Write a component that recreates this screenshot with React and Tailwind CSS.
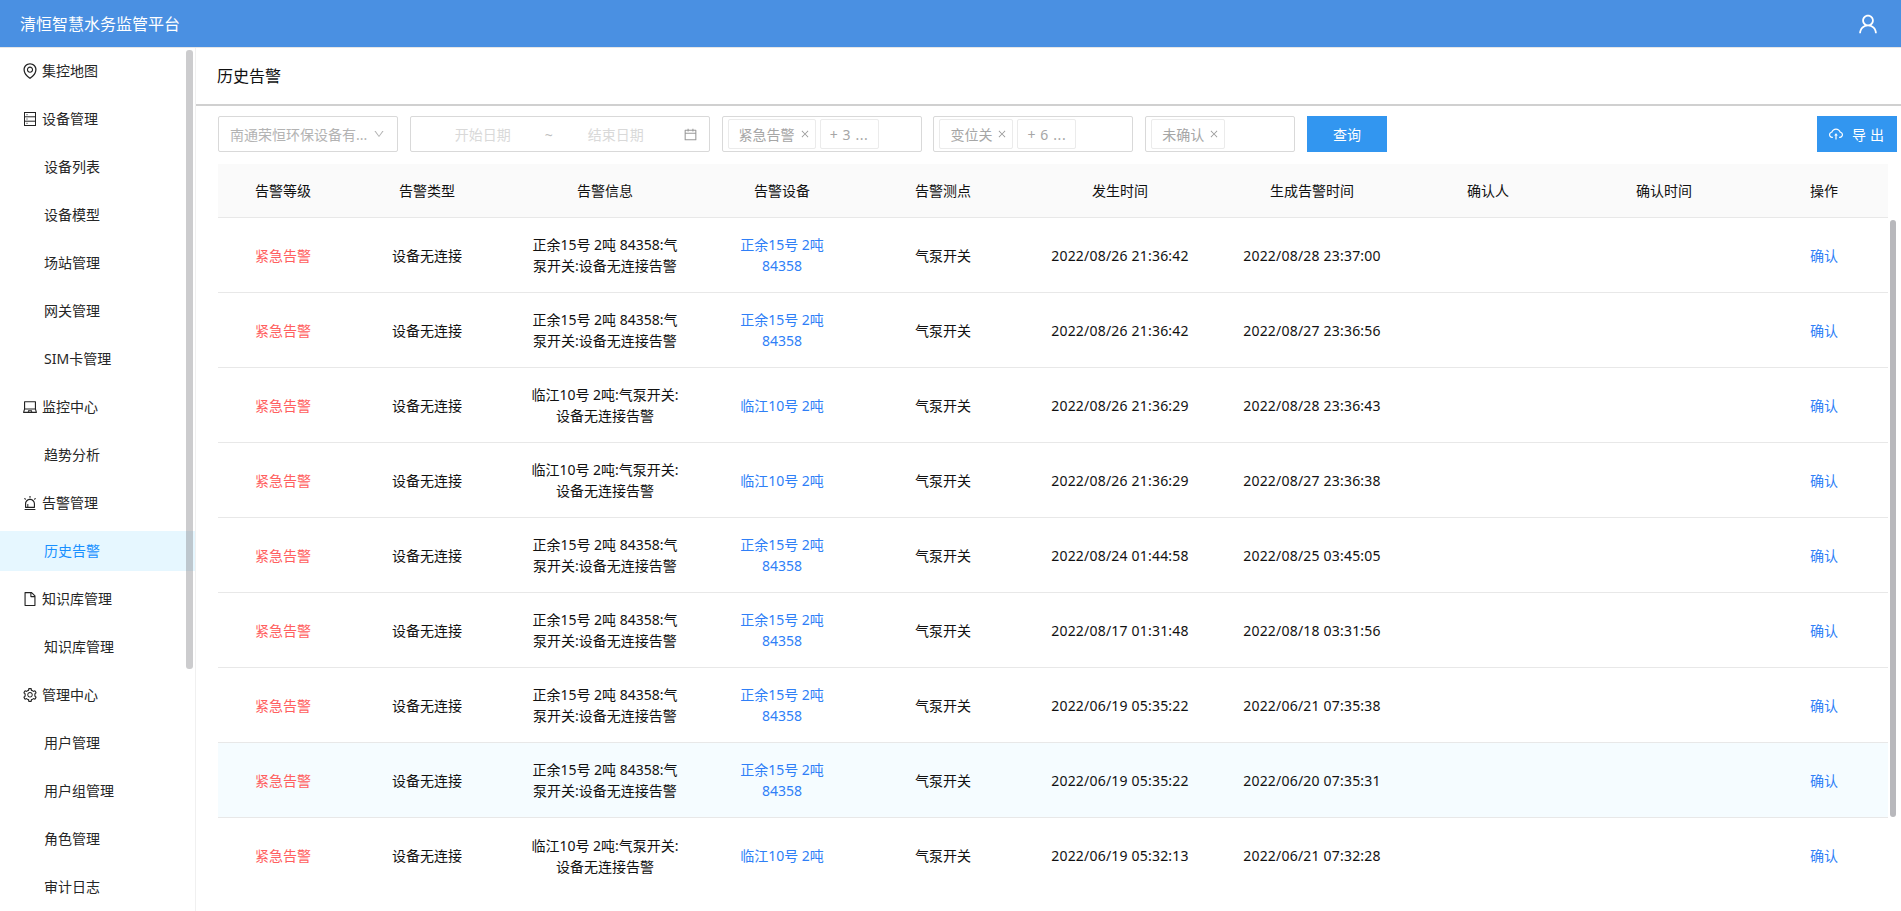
import React from 'react';
import {
  AiOutlineEnvironment,
  AiOutlineLaptop,
  AiOutlineAlert,
  AiOutlineFile,
  AiOutlineSetting,
  AiOutlineUser,
  AiOutlineCloudUpload,
  AiOutlineCalendar,
  AiOutlineDown,
  AiOutlineClose,
} from 'react-icons/ai';

function DeviceIcon({ className }) {
  return (
    <svg className={className} width="14" height="16" viewBox="0 0 14 16" fill="none" stroke="currentColor">
      <rect x="1.5" y="1.5" width="11" height="13" />
      <path d="M1.5 5.8h11M1.5 10.2h11" />
      <path d="M3.5 3.7h1M3.5 8h1M3.5 12.3h1" />
    </svg>
  );
}

const menu = [
  { label: '集控地图', icon: <AiOutlineEnvironment className="text-[18px]" /> },
  { label: '设备管理', icon: <DeviceIcon /> },
  { label: '设备列表' },
  { label: '设备模型' },
  { label: '场站管理' },
  { label: '网关管理' },
  { label: 'SIM卡管理' },
  { label: '监控中心', icon: <AiOutlineLaptop className="text-[16px]" /> },
  { label: '趋势分析' },
  { label: '告警管理', icon: <AiOutlineAlert className="text-[16px]" /> },
  { label: '历史告警', active: true },
  { label: '知识库管理', icon: <AiOutlineFile className="text-[16px]" /> },
  { label: '知识库管理' },
  { label: '管理中心', icon: <AiOutlineSetting className="text-[16px]" /> },
  { label: '用户管理' },
  { label: '用户组管理' },
  { label: '角色管理' },
  { label: '审计日志' },
];

const columns = [
  { title: '告警等级', w: 'w-[130px]' },
  { title: '告警类型', w: 'w-[158px]' },
  { title: '告警信息', w: 'w-[198px]' },
  { title: '告警设备', w: 'w-[156px]' },
  { title: '告警测点', w: 'w-[166px]' },
  { title: '发生时间', w: 'w-[188px]' },
  { title: '生成告警时间', w: 'w-[196px]' },
  { title: '确认人', w: 'w-[156px]' },
  { title: '确认时间', w: 'w-[196px]' },
  { title: '操作', w: 'w-[124px]' },
];

const zy = {
  info: ['正余15号 2吨 84358:气', '泵开关:设备无连接告警'],
  device: ['正余15号 2吨', '84358'],
};
const lj = {
  info: ['临江10号 2吨:气泵开关:', '设备无连接告警'],
  device: ['临江10号 2吨'],
};

const rows = [
  { ...zy, start: '2022/08/26 21:36:42', created: '2022/08/28 23:37:00' },
  { ...zy, start: '2022/08/26 21:36:42', created: '2022/08/27 23:36:56' },
  { ...lj, start: '2022/08/26 21:36:29', created: '2022/08/28 23:36:43' },
  { ...lj, start: '2022/08/26 21:36:29', created: '2022/08/27 23:36:38' },
  { ...zy, start: '2022/08/24 01:44:58', created: '2022/08/25 03:45:05' },
  { ...zy, start: '2022/08/17 01:31:48', created: '2022/08/18 03:31:56' },
  { ...zy, start: '2022/06/19 05:35:22', created: '2022/06/21 07:35:38' },
  { ...zy, start: '2022/06/19 05:35:22', created: '2022/06/20 07:35:31', hover: true },
  { ...lj, start: '2022/06/19 05:32:13', created: '2022/06/21 07:32:28' },
];

function TagSelect({ width, tag, more }) {
  return (
    <div className={`${width} h-[36px] flex items-center gap-[4px] pl-[5px] border border-[#d9d9d9] rounded-[2px]`}>
      <span className="h-[30px] pl-[10px] pr-[5px] flex items-center gap-[5px] border border-[#ebebeb] rounded-[2px] text-[14px] text-[#a6a6a6] whitespace-nowrap">
        {tag}
        <AiOutlineClose className="text-[10px] text-[#999]" />
      </span>
      {more && (
        <span className="w-[59px] h-[30px] flex items-center justify-center border border-[#ebebeb] rounded-[2px] text-[14px] tracking-[0.6px] text-[#a6a6a6] whitespace-nowrap">
          {more}
        </span>
      )}
    </div>
  );
}

function Sidebar() {
  return (
    <aside className="w-[196px] shrink-0 border-r border-[#f0f0f0] relative overflow-hidden pt-[3px]">
      {menu.map((item, i) => (
        <div
          key={i}
          className={`h-[40px] mb-[8px] flex items-center text-[14px] ${
            item.active ? 'bg-[#e6f7ff] text-[#1890ff]' : 'text-[#262626]'
          } ${item.icon ? 'pl-[21px]' : 'pl-[44px]'}`}
        >
          {item.icon && (
            <span className="w-[18px] h-[18px] mr-[3px] flex items-center justify-center text-[#222] shrink-0">
              {item.icon}
            </span>
          )}
          <span className="pb-[2px]">{item.label}</span>
        </div>
      ))}
      <div className="absolute left-[186px] top-[2px] w-[7px] h-[619px] rounded-[3px] bg-[#7f7f85]/40" />
    </aside>
  );
}

function Table() {
  return (
    <div className="relative mt-[12px] ml-[22px] text-[14px] leading-[21px] text-[#111]">
      <div className="flex w-[1670px] h-[54px] items-center bg-[#fafafa] border-b border-[#e8e8e8]">
        {columns.map((c) => (
          <div key={c.title} className={`${c.w} text-center`}>{c.title}</div>
        ))}
      </div>
      {rows.map((r, i) => (
        <div
          key={i}
          className={`flex w-[1670px] h-[75px] items-center ${r.hover ? 'bg-[#f5fcff]' : ''} ${
            i < rows.length - 1 ? 'border-b border-[#e8e8e8]' : ''
          }`}
        >
          <div className={`${columns[0].w} text-center text-[#ff5f5f]`}>紧急告警</div>
          <div className={`${columns[1].w} text-center`}>设备无连接</div>
          <div className={`${columns[2].w} text-center`}>
            {r.info.map((l) => <div key={l}>{l}</div>)}
          </div>
          <div className={`${columns[3].w} text-center text-[#2f7ff7]`}>
            {r.device.map((l) => <div key={l}>{l}</div>)}
          </div>
          <div className={`${columns[4].w} text-center`}>气泵开关</div>
          <div className={`${columns[5].w} text-center tracking-[0.2px]`}>{r.start}</div>
          <div className={`${columns[6].w} text-center tracking-[0.2px]`}>{r.created}</div>
          <div className={columns[7].w} />
          <div className={columns[8].w} />
          <div className={`${columns[9].w} text-center text-[#2f7ff7]`}>确认</div>
        </div>
      ))}
      {/* table scrollbar */}
      <div className="absolute left-[1672px] top-[56px] w-[6px] h-[597px] rounded-[3px] bg-[#b8b8bc]" />
    </div>
  );
}

export default function App() {
  return (
    <div className="h-[911px] w-[1901px] flex flex-col overflow-hidden bg-white font-['Noto_Sans','Noto_Sans_CJK_SC',sans-serif]">
      <header className="h-[48px] shrink-0 bg-[#4a90e2] border-b border-[#e6e6e6] flex items-center justify-between pl-[20px] pr-[21px] text-white">
        <span className="text-[16px]">清恒智慧水务监管平台</span>
        <AiOutlineUser className="text-[24px]" />
      </header>
      <div className="flex flex-1 min-h-0">
        <Sidebar />
        <main className="flex-1 min-w-0">
          <div className="h-[58px] flex items-center pl-[21px] text-[16px] text-[#111] border-b-2 border-[#d0d0d0]">
            历史告警
          </div>
          <div className="mt-[10px] ml-[22px] mr-[4px] flex items-center gap-[11.8px]">
            <div className="w-[180px] h-[36px] flex items-center justify-between pl-[11px] pr-[12px] border border-[#d9d9d9] rounded-[2px] text-[14px] text-[#b3b3b3]">
              <span className="whitespace-nowrap">南通荣恒环保设备有...</span>
              <AiOutlineDown className="text-[12px] shrink-0" />
            </div>
            <div className="w-[300px] h-[36px] flex items-center border border-[#d9d9d9] rounded-[2px] pr-[11px] text-[14px] text-[#d9d9d9] whitespace-nowrap">
              <span className="w-[100px] shrink-0 text-right">开始日期</span>
              <span className="w-[76px] shrink-0 text-center text-[#bfbfbf]">~</span>
              <span className="w-[57px] shrink-0 text-right">结束日期</span>
              <AiOutlineCalendar className="ml-auto text-[15px] text-[#999]" />
            </div>
            <TagSelect width="w-[200px]" tag="紧急告警" more="+ 3 ..." />
            <TagSelect width="w-[200px]" tag="变位关" more="+ 6 ..." />
            <TagSelect width="w-[150px]" tag="未确认" />
            <button className="w-[80px] h-[36px] bg-[#3296f0] text-white text-[14px]">查询</button>
            <button className="ml-auto w-[80px] h-[36px] pl-[2px] bg-[#3296f0] text-white text-[14px] flex items-center justify-center gap-[8px]">
              <AiOutlineCloudUpload className="text-[16px]" />
              <span className="tracking-[4px]">导出</span>
            </button>
          </div>
          <Table />
        </main>
      </div>
    </div>
  );
}
